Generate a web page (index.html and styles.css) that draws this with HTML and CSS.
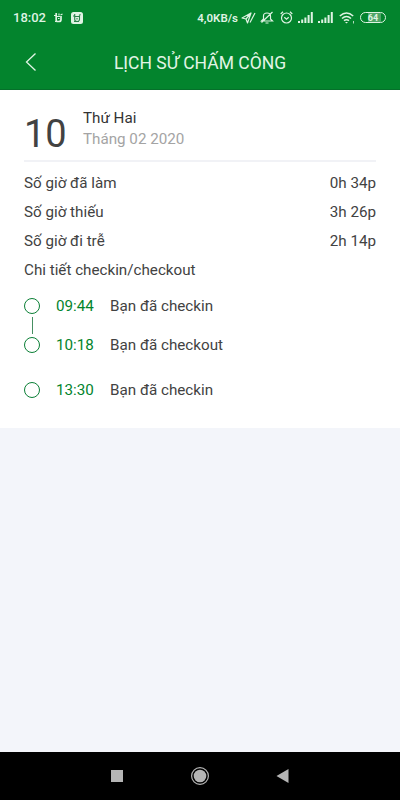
FILE: index.html
```
<!DOCTYPE html>
<html lang="vi">
<head>
  <meta charset="UTF-8" />
  <title>Lịch sử chấm công</title>
  <meta name="viewport" content="width=device-width, initial-scale=1.0"/>
  <link rel="stylesheet" href="styles.css">
</head>
<body>
  <div class="status-bar">
    <span class="clock">18:02</span>
    <svg class="app-icon" width="9" height="12" viewBox="0 0 9 12" fill="none" stroke="currentColor">
      <path d="M2.200 1v7.500q0 1 1 1H5q2 0 2-2V4" stroke-width="1.700"/>
      <path d="M3 4.500h3M4 6.500h1.500M0 3.500h2M6.500 3l2-1M1 9.500h6M5 1.500v2" stroke-width="1.200"/>
    </svg>
    <svg class="app-badge" width="12" height="12" viewBox="0 0 12 12">
      <rect width="12" height="12" rx="2.500" fill="#dff3e3"/>
      <path d="M3.700 2v5.500q0 2 2.300 2t2.500-2V4.500H4M6 6v1.500M8 3.500l1.500-1M2 4h2M3 9.500h5" fill="none" stroke="#28804a" stroke-width="1.100"/>
    </svg>
    <span class="speed">4,0KB/s</span>
    <svg class="send" width="15" height="12" viewBox="0 0 15 12" fill="none" stroke="currentColor" stroke-width="1.200">
      <path d="M1 6 10 1 6.500 11 5 7Z M5 7 10 1M9 10.500 14 1" stroke-linejoin="round"/>
    </svg>
    <svg class="bell" width="14" height="13" viewBox="0 0 14 13" fill="none" stroke="currentColor" stroke-width="1.200">
      <path d="M1.500 10h11L10.500 8V5Q10.500 2 7 2T3.500 5v3ZM5.500 12h3M12.500 1 1.500 11.500"/>
    </svg>
    <svg class="alarm" width="13" height="13" viewBox="0 0 13 13" fill="none" stroke="currentColor" stroke-width="1.200">
      <circle cx="6.500" cy="7" r="5"/>
      <path d="M4.300 6.300 6.500 8.300 8.700 6.300M.7 3 3 .8M12.300 3 10 .8"/>
    </svg>
    <svg class="signal" width="15" height="11" viewBox="0 0 15 11" fill="currentColor">
      <path d="M0 9h2v2H0zM3.200 7.500h2V11h-2zM6.400 5.500h2V11h-2zM9.600 3h2v8h-2zM12.800 0h2v11h-2z"/>
    </svg>
    <svg class="signal" width="15" height="11" viewBox="0 0 15 11" fill="currentColor">
      <path d="M0 9h2v2H0zM3.200 7.500h2V11h-2zM6.400 5.500h2V11h-2zM9.600 3h2v8h-2zM12.800 0h2v11h-2z"/>
    </svg>
    <svg class="wifi" width="16" height="12" viewBox="0 0 16 12" fill="none" stroke="currentColor">
      <path d="M.8 4Q7.500-2 14.200 4M3 6.500Q7.500 2.500 12 6.500M5 8.700Q7.500 6.700 10 8.700" stroke-width="1.600"/>
      <path d="M6 10 7.500 11.500 9 10Z" fill="currentColor" stroke="none"/>
      <path d="M14.500 9v2.500" stroke-width=".8"/>
    </svg>
    <span class="battery">64</span>
  </div>

  <div class="header">
    <svg class="back" width="12" height="20" viewBox="0 0 12 20" fill="none" stroke="currentColor" stroke-width="1.300">
      <path d="M10.500 1.500 1.500 10l9 8.500"/>
    </svg>
    <h1>LỊCH SỬ CHẤM CÔNG</h1>
  </div>

  <div class="card">
    <div class="date">
      <span class="day">10</span>
      <div class="date-text">
        <p class="weekday">Thứ Hai</p>
        <p class="month">Tháng 02 2020</p>
      </div>
    </div>

    <div class="row"><span>Số giờ đã làm</span><span>0h 34p</span></div>
    <div class="row"><span>Số giờ thiếu</span><span>3h 26p</span></div>
    <div class="row"><span>Số giờ đi trễ</span><span>2h 14p</span></div>
    <div class="row"><span>Chi tiết checkin/checkout</span></div>

    <div class="timeline">
      <div class="event">
        <span class="dot"></span><span class="time">09:44</span><span>Bạn đã checkin</span>
      </div>
      <div class="line"></div>
      <div class="event">
        <span class="dot"></span><span class="time">10:18</span><span>Bạn đã checkout</span>
      </div>
      <div class="event next">
        <span class="dot"></span><span class="time">13:30</span><span>Bạn đã checkin</span>
      </div>
    </div>
  </div>

  <div class="nav-bar">
    <svg width="18" height="18" viewBox="0 0 18 18" fill="currentColor"><path d="M3 3h12v12H3z"/></svg>
    <svg width="18" height="18" viewBox="0 0 18 18">
      <circle cx="9" cy="9" r="8.400" fill="none" stroke="currentColor" stroke-width="1.200"/>
      <circle cx="9" cy="9" r="6.300" fill="currentColor"/>
    </svg>
    <svg width="18" height="18" viewBox="0 0 18 18" fill="currentColor"><path d="M14.500 2v14L2.500 9z"/></svg>
  </div>
</body>
</html>
```
FILE: styles.css
```
* {
  box-sizing: border-box;
}
body {
  margin: 0;
  height: 100vh;
  display: flex;
  flex-direction: column;
  font-family: Roboto, 'Noto Sans', sans-serif;
  font-size: 15.2px;
  background: #f3f5fa;
  color: #424242;
}
h1, p {
  margin: 0;
}
svg {
  display: block;
  flex: none;
}

/* phone status bar */
.status-bar {
  display: flex;
  align-items: center;
  height: 35px;
  padding: 0 14px 0 13px;
  background: #03842d;
  color: #dff3e3;
}
.clock {
  width: 41px;
  font-size: 13px;
  font-weight: 500;
}
.app-badge {
  margin-left: 8px;
}
.speed {
  margin-left: auto;
  margin-right: 3px;
  font-size: 11.5px;
  font-weight: 600;
}
.bell {
  margin-left: 4px;
}
.alarm {
  margin-left: 6px;
}
.signal {
  margin-left: 5px;
}
.wifi {
  margin-left: 6px;
}
.battery {
  width: 26px;
  height: 11px;
  margin-left: 5px;
  border: 1px solid #dff3e3;
  border-radius: 6px;
  background: linear-gradient(90deg, #03842d 30%, #4fa568 30% 85%, #03842d 85%);
  font-size: 9px;
  font-weight: 700;
  line-height: 10px;
  text-align: center;
}

.header {
  display: flex;
  align-items: center;
  height: 55px;
  padding: 0 25px;
  border-bottom: 1px solid #05702a;
  background: #03842d;
  color: #e2f5e6;
}
.header h1 {
  flex: 1;
  margin-right: 12px;
  padding-top: 1px;
  font-size: 17.5px;
  font-weight: 400;
  text-align: center;
}

.card {
  height: 338px;
  padding: 0 24px;
  background: #fff;
}
.date {
  display: flex;
  height: 72px;
  border-bottom: 2px solid #f1f2f6;
  margin-bottom: 7px;
}
.day {
  width: 59px;
  padding-top: 21px;
  font-size: 38px;
  line-height: 46px;
}
.date-text {
  padding-top: 18px;
  line-height: 21px;
}
.weekday {
  color: #333;
}
.month {
  color: #a4a4a4;
}
.row {
  display: flex;
  justify-content: space-between;
  height: 29px;
  line-height: 29px;
}

.timeline {
  padding-top: 13px;
}
.event {
  display: flex;
  align-items: center;
  height: 16px;
  line-height: 18px;
}
.event.next {
  margin-top: 29px;
}
.dot {
  width: 16px;
  height: 16px;
  border: 1.400px solid #0b7f36;
  border-radius: 50%;
}
.time {
  width: 54px;
  margin-left: 16px;
  color: #03842d;
}
.line {
  width: 1px;
  height: 17px;
  margin: 3px 0 3px 8px;
  background: #468f62;
}

/* android navigation */
.nav-bar {
  display: flex;
  justify-content: center;
  align-items: center;
  gap: 65px;
  height: 48px;
  margin-top: auto;
  background: #000;
  color: #b5b5b5;
}
```
